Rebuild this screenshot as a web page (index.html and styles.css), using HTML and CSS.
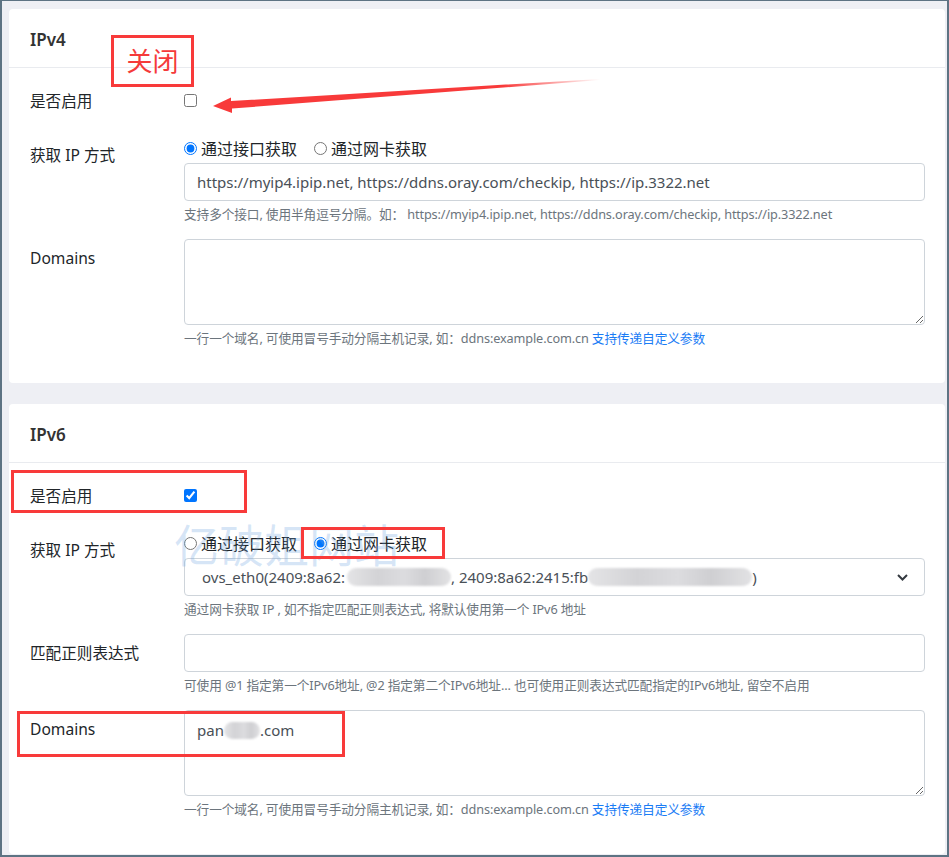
FILE: index.html
```html
<!DOCTYPE html>
<html>
  <head>
    <meta charset="utf-8">
    <link rel="stylesheet" href="styles.css">
  </head>
  <body>
    <div class="frame">
      <div class="card">
        <div class="card-header">IPv4</div>
        <div class="card-body">
          <div class="form-row">
            <label class="col-label">是否启用</label>
            <div class="col-field">
              <input type="checkbox" class="check">
            </div>
          </div>
          <div class="form-row">
            <label class="col-label">获取 IP 方式</label>
            <div class="col-field">
              <div class="radios">
                <label class="radio"><input type="radio" name="v4" checked>通过接口获取</label>
                <label class="radio"><input type="radio" name="v4">通过网卡获取</label>
              </div>
              <input type="text" class="input" value="https://myip4.ipip.net, https://ddns.oray.com/checkip, https://ip.3322.net">
              <small class="help">支持多个接口, 使用半角逗号分隔。如： https://myip4.ipip.net, https://ddns.oray.com/checkip, https://ip.3322.net</small>
            </div>
          </div>
          <div class="form-row">
            <label class="col-label">Domains</label>
            <div class="col-field">
              <textarea class="input textarea"></textarea>
              <small class="help">一行一个域名, 可使用冒号手动分隔主机记录, 如：ddns:example.com.cn <a href="#">支持传递自定义参数</a></small>
            </div>
          </div>
        </div>
      </div>

      <div class="card">
        <div class="card-header">IPv6</div>
        <div class="card-body">
          <div class="form-row">
            <label class="col-label">是否启用</label>
            <div class="col-field">
              <input type="checkbox" class="check" checked>
            </div>
          </div>
          <div class="form-row">
            <label class="col-label">获取 IP 方式</label>
            <div class="col-field">
              <div class="radios">
                <label class="radio"><input type="radio" name="v6">通过接口获取</label>
                <label class="radio"><input type="radio" name="v6" checked>通过网卡获取</label>
              </div>
              <div class="input select">
                <span>ovs_eth0(2409:8a62:</span><span class="blur blur-a"></span><span>, 2409:8a62:2415:fb</span><span class="blur blur-b"></span><span>)</span>
                <svg class="chevron" width="11" height="7" viewBox="0 0 11 7"><polyline points="1,1 5.5,5.5 10,1" fill="none" stroke="#343a40" stroke-width="2"/></svg>
              </div>
              <small class="help">通过网卡获取 IP , 如不指定匹配正则表达式, 将默认使用第一个 IPv6 地址</small>
            </div>
          </div>
          <div class="form-row">
            <label class="col-label">匹配正则表达式</label>
            <div class="col-field">
              <input type="text" class="input">
              <small class="help">可使用 @1 指定第一个IPv6地址, @2 指定第二个IPv6地址... 也可使用正则表达式匹配指定的IPv6地址, 留空不启用</small>
            </div>
          </div>
          <div class="form-row">
            <label class="col-label">Domains</label>
            <div class="col-field">
              <div class="input textarea textarea-filled">pan<span class="blur blur-c"></span>.com</div>
              <small class="help">一行一个域名, 可使用冒号手动分隔主机记录, 如：ddns:example.com.cn <a href="#">支持传递自定义参数</a></small>
            </div>
          </div>
        </div>
      </div>
    </div>

    <!-- screenshot annotations -->
    <div class="marks">
      <div class="watermark">亿破姐网站</div>
      <div class="mark mark-close">关闭</div>
      <div class="mark mark-enable"></div>
      <div class="mark mark-radio"></div>
      <div class="mark mark-domains"></div>
      <svg class="arrow" width="949" height="857" viewBox="0 0 949 857">
        <defs>
          <linearGradient id="fade" x1="213" y1="0" x2="600" y2="0" gradientUnits="userSpaceOnUse">
            <stop offset="0.75" stop-color="#f83a3a" stop-opacity="1"/>
            <stop offset="1" stop-color="#f83a3a" stop-opacity="0"/>
          </linearGradient>
        </defs>
        <polygon points="213,106 231,97.5 231,101 600,79 600,80 232,108.5 232,113" fill="url(#fade)"/>
      </svg>
    </div>
  </body>
</html>
```

FILE: styles.css
```css
body {
  margin: 0;
  padding: 0;
  position: relative;
  font-family: "Noto Sans", "Noto Sans CJK SC", sans-serif;
  color: #212529;
}

.frame {
  box-sizing: border-box;
  height: 857px;
  overflow: hidden;
  background-color: #eeeff4;
  border-left: 2px solid #5d7383;
  border-right: 2px solid #5d7383;
  border-top: 1px solid #5d7383;
  border-bottom: 2px solid #5d7383;
  padding: 8px 2px 0 7px;
}

.card {
  background-color: #fff;
  border-radius: 4px;
}

.card + .card {
  margin-top: 21px;
}

.card-header {
  padding: 19px 21px 15px;
  font-size: 17px;
  line-height: 24px;
  font-weight: 600;
  color: #333;
  border-bottom: 1px solid #e9ebef;
}

.card-body {
  display: flex;
  flex-direction: column;
  gap: 16px;
  padding: 14px 20px 36px 21px;
}

.form-row {
  display: flex;
}

.col-label {
  width: 154px;
  flex-shrink: 0;
  padding-top: 7px;
  font-size: 15.6px;
  line-height: 24px;
}

.col-field {
  flex: 1;
  display: flex;
  flex-direction: column;
  align-items: flex-start;
}

.check {
  width: 13px;
  height: 13px;
  margin: 12px 0 13px;
}

.radios {
  display: flex;
  align-items: center;
  height: 24px;
  margin-bottom: 3px;
  font-size: 16px;
}

.radio {
  display: flex;
  align-items: center;
  margin-right: 17px;
}

.radio input {
  width: 13px;
  height: 13px;
  margin: 0 4px 0 0;
}

.input {
  box-sizing: border-box;
  width: 100%;
  height: 38px;
  margin: 0;
  padding: 6px 12px;
  font-family: inherit;
  font-size: 15px;
  line-height: 24px;
  color: #495057;
  background-color: #fff;
  border: 1px solid #ced4da;
  border-radius: 4px;
}

.textarea {
  height: 86px;
  resize: vertical;
  overflow: auto;
}

.textarea-filled {
  padding-top: 7px;
}

.select {
  display: flex;
  align-items: center;
  padding-left: 17px;
  white-space: nowrap;
}

.chevron {
  margin-left: auto;
  margin-right: 4px;
}

.blur {
  display: inline-block;
  height: 18px;
  vertical-align: middle;
  border-radius: 9px;
  filter: blur(1px);
  background: linear-gradient(90deg, #e4e4e6 0%, #d3d3d6 30%, #dcdcdf 55%, #cfcfd2 75%, #e2e2e4 100%);
}

.blur-a {
  width: 104px;
  margin-left: 2px;
}

.blur-b {
  width: 164px;
}

.blur-c {
  width: 36px;
  height: 17px;
  vertical-align: -3px;
}

.help {
  margin-top: 4px;
  font-size: 12.7px;
  line-height: 18px;
  letter-spacing: -0.12px;
  color: #6c757d;
}

.help a {
  color: #1a7cf5;
  text-decoration: none;
}

/* annotations drawn over the screenshot */
.marks {
  position: absolute;
  top: 0;
  left: 0;
  width: 949px;
  height: 857px;
  pointer-events: none;
}

.watermark {
  position: absolute;
  left: 174px;
  top: 518px;
  font-size: 45px;
  line-height: 56px;
  color: rgba(110, 165, 225, 0.28);
}

.mark {
  position: absolute;
  box-sizing: border-box;
  border: 3px solid #f83a3a;
}

.mark-close {
  left: 111px;
  top: 35px;
  width: 83px;
  height: 52px;
  font-size: 26px;
  line-height: 46px;
  text-align: center;
  color: #f53a3a;
}

.mark-enable {
  left: 11px;
  top: 470px;
  width: 236px;
  height: 43px;
}

.mark-radio {
  left: 301px;
  top: 527px;
  width: 144px;
  height: 32px;
}

.mark-domains {
  left: 17px;
  top: 711px;
  width: 328px;
  height: 46px;
}

.arrow {
  position: absolute;
  top: 0;
  left: 0;
}
```
